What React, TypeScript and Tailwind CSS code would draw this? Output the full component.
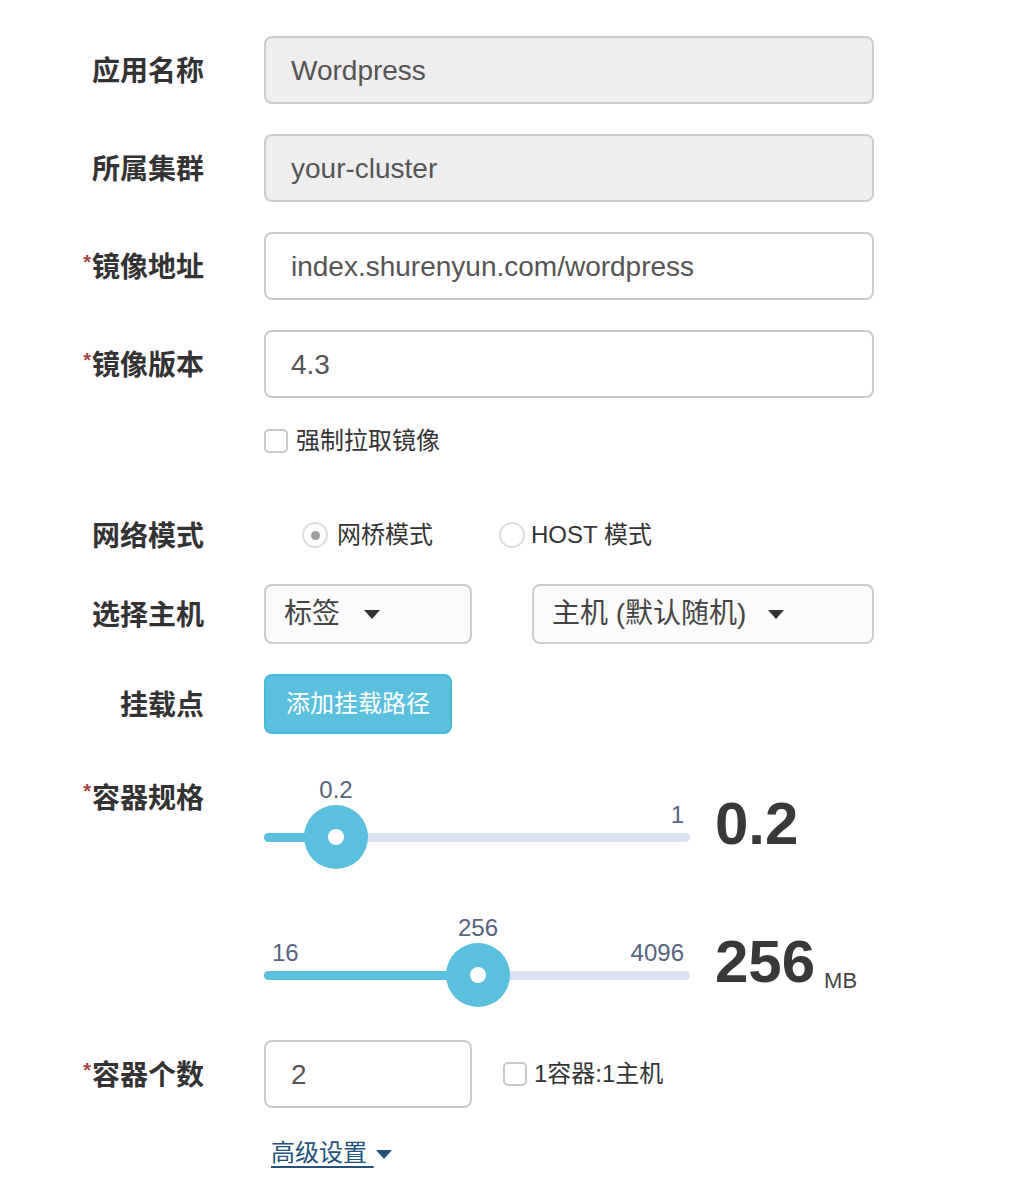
import React from 'react';

const Star = () => (
  <span className="text-[#a94442] text-[20px] font-bold leading-none align-top relative top-[5px] mr-[1px]">*</span>
);

function Label({ text, required }: { text: string; required?: boolean }) {
  return (
    <div className="w-[204px] shrink-0 text-right text-[28px] font-bold text-[#333333] relative top-[2px]">
      {required && <Star />}
      {text}
    </div>
  );
}

function TextInput({ value, disabled, width = 'w-[610px]' }: { value: string; disabled?: boolean; width?: string }) {
  return (
    <div
      className={`${width} h-[68px] flex items-center px-[25px] border-2 rounded-[8px] text-[28px] text-[#555555] ${
        disabled ? 'bg-[#eeeeee] border-[#cccccc]' : 'bg-white border-[#cccccc]'
      }`}
    >
      <span className="relative top-[1px]">{value}</span>
    </div>
  );
}

const Caret = ({ color = '#333333' }: { color?: string }) => (
  <svg width="16" height="9" viewBox="0 0 16 9" className="inline-block">
    <path d="M0 0 L16 0 L8 9 Z" fill={color} />
  </svg>
);

function Checkbox() {
  return <span className="inline-block w-[24px] h-[24px] rounded-[5px] border-2 border-[#c8c8c8] bg-white" />;
}

function Radio({ checked }: { checked?: boolean }) {
  return (
    <span className="w-[26px] h-[26px] rounded-full border-2 border-[#dddddd] bg-white flex items-center justify-center">
      {checked && <span className="w-[9px] h-[9px] rounded-full bg-[#a0a0a0]" />}
    </span>
  );
}

function Slider({ pos, value, min, max }: { pos: number; value: string; min?: string; max: string }) {
  return (
    <div className="relative w-[426px] h-[96px] shrink-0">
      <div
        className="absolute top-0 h-[32px] leading-[32px] text-[24px] text-[#56647e] -translate-x-1/2"
        style={{ left: pos }}
      >
        {value}
      </div>
      {min && <div className="absolute left-[8px] top-[25px] h-[32px] leading-[32px] text-[24px] text-[#56647e]">{min}</div>}
      <div className="absolute right-[6px] top-[25px] h-[32px] leading-[32px] text-[24px] text-[#56647e]">{max}</div>
      <div className="absolute left-0 right-0 top-[59px] h-[9px] rounded-full bg-[#dae1f3]" />
      <div className="absolute left-0 top-[59px] h-[9px] rounded-full bg-[#5bc0de]" style={{ width: pos }} />
      <div
        className="absolute top-[31px] w-[64px] h-[64px] rounded-full bg-[#5bc0de] flex items-center justify-center -translate-x-1/2"
        style={{ left: pos }}
      >
        <span className="w-[16px] h-[16px] rounded-full bg-white" />
      </div>
    </div>
  );
}

export default function App() {
  return (
    <div className="w-[1030px] min-h-[1184px] bg-white font-['Liberation_Sans','Noto_Sans_CJK_SC',sans-serif] pt-[36px]">
      <div className="flex items-center gap-[60px] mb-[30px]">
        <Label text="应用名称" />
        <TextInput value="Wordpress" disabled />
      </div>
      <div className="flex items-center gap-[60px] mb-[30px]">
        <Label text="所属集群" />
        <TextInput value="your-cluster" disabled />
      </div>
      <div className="flex items-center gap-[60px] mb-[30px]">
        <Label text="镜像地址" required />
        <TextInput value="index.shurenyun.com/wordpress" />
      </div>
      <div className="flex items-center gap-[60px]">
        <Label text="镜像版本" required />
        <TextInput value="4.3" />
      </div>

      <div className="flex items-center h-[24px] mt-[31px] pl-[264px] gap-[8px] text-[24px] text-[#333333]">
        <Checkbox />
        <span>强制拉取镜像</span>
      </div>

      <div className="flex items-center gap-[60px] h-[40px] mt-[62px]">
        <Label text="网络模式" />
        <div className="flex items-center pl-[38px] text-[24px] text-[#333333]">
          <div className="flex items-center gap-[9px]">
            <Radio checked />
            <span>网桥模式</span>
          </div>
          <div className="flex items-center gap-[6px] ml-[66px]">
            <Radio />
            <span>HOST 模式</span>
          </div>
        </div>
      </div>

      <div className="flex items-center gap-[60px] mt-[29px]">
        <Label text="选择主机" />
        <div className="flex gap-[60px]">
          <div className="w-[208px] h-[60px] flex items-center gap-[24px] px-[18px] border-2 border-[#cccccc] rounded-[8px] bg-[#fbfbfb] text-[28px] text-[#444444]">
            <span>标签</span>
            <Caret />
          </div>
          <div className="w-[342px] h-[60px] flex items-center gap-[22px] px-[18px] border-2 border-[#cccccc] rounded-[8px] bg-[#fbfbfb] text-[28px] text-[#444444]">
            <span>主机 (默认随机)</span>
            <Caret />
          </div>
        </div>
      </div>

      <div className="flex items-center gap-[60px] mt-[30px]">
        <Label text="挂载点" />
        <button className="w-[188px] h-[60px] rounded-[8px] bg-[#5bc0de] border-2 border-[#46b8da] text-white text-[24px]">
          添加挂载路径
        </button>
      </div>

      <div className="flex items-start gap-[60px] mt-[40px]">
        <div className="h-[46px] leading-[46px]">
          <Label text="容器规格" required />
        </div>
        <div className="flex items-center gap-[25px]">
          <Slider pos={72} value="0.2" max="1" />
          <div className="text-[60px] font-bold text-[#383838] leading-none pt-[4px]">0.2</div>
        </div>
      </div>

      <div className="flex items-start gap-[60px] mt-[42px]">
        <div className="w-[204px] shrink-0" />
        <div className="flex items-center gap-[25px]">
          <Slider pos={214} value="256" min="16" max="4096" />
          <div className="flex items-baseline pt-[4px]">
            <span className="text-[60px] font-bold text-[#383838] leading-none">256</span>
            <span className="text-[22px] text-[#444444] ml-[9px] relative top-[6px]">MB</span>
          </div>
        </div>
      </div>

      <div className="flex items-center gap-[60px] mt-[32px]">
        <Label text="容器个数" required />
        <TextInput value="2" width="w-[208px]" />
        <div className="flex items-center gap-[7px] -ml-[29px] text-[24px] text-[#333333]">
          <Checkbox />
          <span>1容器:1主机</span>
        </div>
      </div>

      <div className="pl-[271px] mt-[29px] h-[32px] flex items-center text-[24px] text-[#23527c]">
        <span className="underline underline-offset-[5px]">高级设置&nbsp;</span>
        <span className="ml-[2px]">
          <Caret color="#23527c" />
        </span>
      </div>
    </div>
  );
}
